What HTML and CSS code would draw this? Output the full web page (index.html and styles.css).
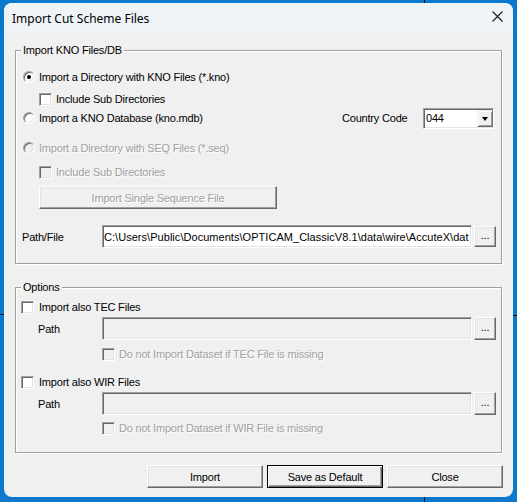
FILE: index.html
```html
<!DOCTYPE html>
<html>
<head>
<meta charset="utf-8">
<link rel="stylesheet" href="styles.css">
</head>
<body>
<span class="desk-mark m-top"></span>
<span class="desk-mark m-bottom"></span>
<span class="desk-mark m-left"></span>
<span class="desk-mark m-right"></span>
<div class="window">
  <div class="titlebar">
    <span class="title">Import Cut Scheme Files</span>
    <svg class="close" width="11" height="11" viewBox="0 0 11 11"><path d="M0.5 0.5L10.5 10.5M10.5 0.5L0.5 10.5" stroke="#1b1b1b" stroke-width="1.1" fill="none"/></svg>
  </div>
  <div class="client">
    <div class="group g1">
      <span class="legend">Import KNO Files/DB</span>
      <div class="row r1"><span class="radio checked"></span><span class="lbl-r">Import a Directory with KNO Files (*.kno)</span></div>
      <div class="row r2 sub"><span class="check"></span><span class="lbl-c">Include Sub Directories</span></div>
      <div class="row r3"><span class="radio"></span><span class="lbl-r">Import a KNO Database (kno.mdb)</span>
        <div class="country"><span class="cc-label">Country Code</span>
          <div class="combo"><span class="combo-text">044</span><span class="drop"><span class="arrow"></span></span></div>
        </div>
      </div>
      <div class="row r4 disabled"><span class="radio dis"></span><span class="lbl-r">Import a Directory with SEQ Files (*.seq)</span></div>
      <div class="row r5 sub disabled"><span class="check dis"></span><span class="lbl-c">Include Sub Directories</span></div>
      <button class="btn single disabled">Import Single Sequence File</button>
      <div class="row prow p1"><span class="plabel">Path/File</span>
        <div class="field"><span class="field-text">C:\Users\Public\Documents\OPTICAM_ClassicV8.1\data\wire\AccuteX\dat</span></div>
        <button class="btn dots small">...</button>
      </div>
    </div>

    <div class="group g2">
      <span class="legend">Options</span>
      <div class="row o1"><span class="check top"></span><span class="lbl-t">Import also TEC Files</span></div>
      <div class="row prow o2"><span class="plabel path">Path</span>
        <div class="field dis"></div>
        <button class="btn dots">...</button>
      </div>
      <div class="row o3 disabled"><span class="check dis inner"></span><span class="lbl-c">Do not Import Dataset if TEC File is missing</span></div>
      <div class="row o4"><span class="check top"></span><span class="lbl-t">Import also WIR Files</span></div>
      <div class="row prow o5"><span class="plabel path">Path</span>
        <div class="field dis"></div>
        <button class="btn dots">...</button>
      </div>
      <div class="row o6 disabled"><span class="check dis inner"></span><span class="lbl-c">Do not Import Dataset if WIR File is missing</span></div>
    </div>

    <div class="actions">
      <button class="btn act">Import</button>
      <button class="btn act default">Save as Default</button>
      <button class="btn act">Close</button>
    </div>
  </div>
</div>
</body>
</html>
```
FILE: styles.css
```css
* { box-sizing: border-box; }
html, body { margin: 0; padding: 0; }
body {
  position: relative;
  width: 517px;
  height: 502px;
  overflow: hidden;
  background: #0a78cd;
  font-family: "Liberation Sans", Arial, sans-serif;
  font-size: 11px;
  letter-spacing: -0.2px;
  color: #000;
}
.desk-mark { position: absolute; background: #111; }
.m-top { left: 424px; top: 0; width: 1px; height: 3px; }
.m-bottom { left: 424px; top: 497px; width: 1px; height: 5px; }
.m-left { left: 0; top: 314px; width: 4px; height: 1px; }
.m-right { left: 513px; top: 315px; width: 4px; height: 1px; }
.window {
  margin: 3px 0 0 4px;
  width: 509px;
  height: 494px;
  background: #f0f0f0;
  border-radius: 8px;
  overflow: hidden;
  display: flex;
  flex-direction: column;
}
.titlebar {
  flex: none;
  height: 30px;
  background: #eef3f8;
  display: flex;
  align-items: center;
  padding: 0 10px 0 8px;
}
.title {
  flex: 1;
  font-family: "Segoe UI", "Noto Sans", sans-serif;
  font-size: 12px;
  letter-spacing: 0;
  color: #000;
}
.close { display: block; margin-top: -3px; }
.client {
  flex: 1;
  padding: 17px 0 0 11px;
  display: flex;
  flex-direction: column;
}
.group {
  position: relative;
  width: 487px;
  border: 1px solid #a0a0a0;
  box-shadow: inset 1px 1px 0 #fff, 1px 1px 0 #fff;
  display: flex;
  flex-direction: column;
  flex: none;
}
.g1 { padding-bottom: 15px; }
.g2 { margin-top: 23px; padding-bottom: 16px; }
.legend {
  position: absolute;
  left: 5px;
  top: -7px;
  padding: 0 2px;
  line-height: 13px;
  background: #f0f0f0;
}
.row {
  display: flex;
  align-items: center;
  height: 16px;
  flex: none;
  white-space: nowrap;
}
.r1 { margin-top: 18px; }
.r2 { margin-top: 6px; }
.r3 { margin-top: 3px; }
.r4 { margin-top: 14px; }
.r5 { margin-top: 8px; }
.p1 { margin-top: 16px; }
.o1 { margin-top: 11px; }
.o2 { margin-top: 2px; }
.o3 { margin-top: 6px; }
.o4 { margin-top: 12px; }
.o5 { margin-top: 2px; }
.o6 { margin-top: 5px; }

.radio {
  flex: none;
  position: relative;
  width: 12px;
  height: 12px;
  margin-left: 7px;
  border-radius: 50%;
  border: 1px solid;
  border-color: #a0a0a0 #fff #fff #a0a0a0;
  box-shadow: inset 1px 1px 0 #696969, inset -1px -1px 0 #e3e3e3;
  background: #fff;
}
.radio.checked::after {
  content: "";
  position: absolute;
  left: 3px;
  top: 3px;
  width: 4px;
  height: 4px;
  border-radius: 50%;
  background: #000;
}
.radio.dis { background: #f0f0f0; }
.lbl-r { margin-left: 4px; }

.check {
  flex: none;
  width: 13px;
  height: 13px;
  margin-left: 23px;
  border: 1px solid;
  border-color: #a0a0a0 #fff #fff #a0a0a0;
  box-shadow: inset 1px 1px 0 #696969, inset -1px -1px 0 #e3e3e3;
  background: #fff;
}
.check.dis { background: #f0f0f0; }
.check.top { margin-left: 5px; }
.check.inner { margin-left: 86px; }
.lbl-c { margin-left: 4px; }
.lbl-t { margin-left: 5px; }

.disabled, .btn.disabled { color: #a0a0a0; text-shadow: 1px 1px 0 #fff; }

.country {
  margin-left: auto;
  margin-right: 7px;
  display: flex;
  align-items: center;
}
.cc-label { width: 81px; }
.combo {
  width: 71px;
  height: 21px;
  border: 1px solid;
  border-color: #a0a0a0 #fff #fff #a0a0a0;
  box-shadow: inset 1px 1px 0 #696969, inset -1px -1px 0 #e3e3e3;
  background: #fff;
  padding: 1px 0 1px 1px;
  display: flex;
  align-items: center;
}
.combo-text { padding-left: 1px; }
.drop {
  margin-left: auto;
  width: 16px;
  height: 17px;
  background: #f0f0f0;
  border: 1px solid;
  border-color: #f0f0f0 #696969 #696969 #f0f0f0;
  box-shadow: inset 1px 1px 0 #fff, inset -1px -1px 0 #a0a0a0;
  display: flex;
  align-items: center;
  justify-content: center;
}
.arrow {
  width: 0;
  height: 0;
  border-left: 3.5px solid transparent;
  border-right: 3.5px solid transparent;
  border-top: 4px solid #000;
  margin-top: 1px;
}

.prow { height: 23px; }
.plabel { margin-left: 6px; width: 80px; }
.plabel.path { margin-left: 22px; width: 64px; }
.field {
  flex: none;
  width: 370px;
  height: 23px;
  border: 1px solid;
  border-color: #a0a0a0 #fff #fff #a0a0a0;
  box-shadow: inset 1px 1px 0 #696969, inset -1px -1px 0 #e3e3e3;
  background: #fff;
  padding: 0 1px 0 1px;
  display: flex;
  align-items: center;
  white-space: nowrap;
}
.field-text {
  flex: 1;
  min-width: 0;
  overflow: hidden;
  letter-spacing: 0.04px;
}
.field.dis { background: #f0f0f0; }

.btn {
  margin: 0;
  padding: 0;
  font: inherit;
  letter-spacing: inherit;
  color: #000;
  background: #f0f0f0;
  border: 1px solid;
  border-color: #fff #696969 #696969 #fff;
  box-shadow: inset -1px -1px 0 #a0a0a0, inset 1px 1px 0 #e3e3e3;
  display: flex;
  align-items: center;
  justify-content: center;
  white-space: nowrap;
  flex: none;
}
.btn.single { margin-top: 6px; margin-left: 23px; width: 238px; height: 23px; }
.btn.dots {
  margin-left: 2px;
  width: 22px;
  height: 23px;
  padding-bottom: 3px;
}
.btn.dots.small { height: 21px; }
.actions {
  margin-top: 12px;
  display: flex;
  justify-content: flex-end;
  gap: 4px;
  padding-right: 10px;
}
.act { width: 116px; height: 23px; }
.btn.default {
  border-color: #000;
  box-shadow: inset 1px 1px 0 #fff, inset -1px -1px 0 #696969, inset -2px -2px 0 #a0a0a0;
}
```
